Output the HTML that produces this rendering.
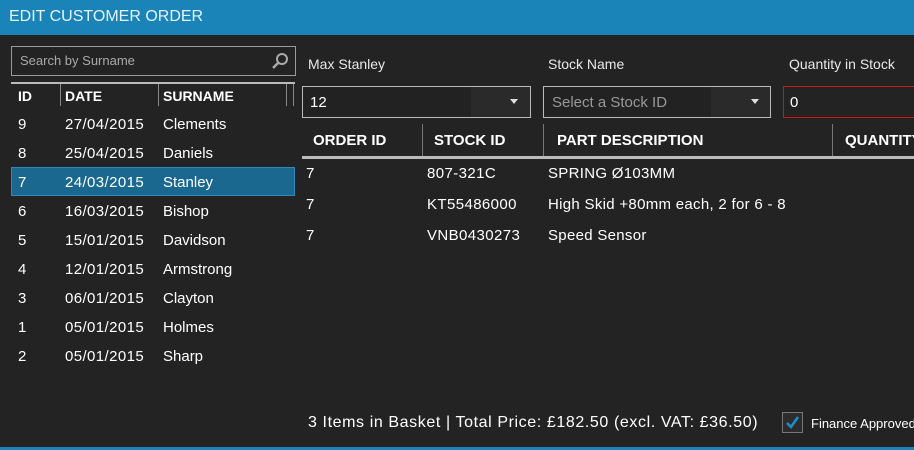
<!DOCTYPE html>
<html><head><style>
*{margin:0;padding:0;box-sizing:border-box}
body{width:914px;height:450px;background:#232323;font-family:"Liberation Sans",sans-serif;color:#fff;position:relative;overflow:hidden}
.a{position:absolute;white-space:nowrap}
.t{font-size:15px}
.h{font-weight:bold;font-size:14px}
.lab{font-size:14px;color:#e8e8e8}
</style></head><body>
<div class="a" style="left:0;top:0;width:914px;height:35px;background:#1a84b9"></div>
<div class="a" style="left:9px;top:8px;font-size:16px;color:#e6f2f8">EDIT CUSTOMER ORDER</div>
<div class="a" style="left:0;top:447px;width:914px;height:3px;background:#1a84b9"></div>

<div class="a" style="left:11px;top:46px;width:285px;height:30px;border:1px solid #9a9a9a"></div>
<div class="a" style="left:20px;top:53px;font-size:13px;color:#aaa">Search by Surname</div>
<svg class="a" style="left:271px;top:52px" width="18" height="18" viewBox="0 0 18 18"><circle cx="11" cy="7" r="5" fill="none" stroke="#aaa" stroke-width="2"/><line x1="7.5" y1="10.5" x2="2" y2="16" stroke="#aaa" stroke-width="2.5"/></svg>
<div class="a" style="left:11px;top:82px;width:284px;height:2px;background:#bbb"></div>
<div class="a" style="left:60px;top:84px;width:1px;height:22px;background:#888"></div>
<div class="a" style="left:158px;top:84px;width:1px;height:22px;background:#888"></div>
<div class="a" style="left:286px;top:84px;width:1px;height:22px;background:#888"></div>
<div class="a" style="left:293px;top:84px;width:1px;height:22px;background:#888"></div>
<div class="a h" style="left:18px;top:88px">ID</div>
<div class="a h" style="left:65px;top:88px">DATE</div>
<div class="a h" style="left:163px;top:88px">SURNAME</div>
<div class="a" style="left:11px;top:167px;width:284px;height:29px;background:#1a6890;border:1px solid #2e8ab8"></div>
<div class="a t" style="left:18px;top:110px;line-height:29px">9<br>8<br>7<br>6<br>5<br>4<br>3<br>1<br>2</div>
<div class="a t" style="left:65px;top:110px;line-height:29px;letter-spacing:0.4px">27/04/2015<br>25/04/2015<br>24/03/2015<br>16/03/2015<br>15/01/2015<br>12/01/2015<br>06/01/2015<br>05/01/2015<br>05/01/2015</div>
<div class="a t" style="left:163px;top:110px;line-height:29px">Clements<br>Daniels<br>Stanley<br>Bishop<br>Davidson<br>Armstrong<br>Clayton<br>Holmes<br>Sharp</div>

<div class="a lab" style="left:308px;top:56px">Max Stanley</div>
<div class="a lab" style="left:548px;top:56px">Stock Name</div>
<div class="a lab" style="left:789px;top:56px">Quantity in Stock</div>
<div class="a" style="left:302px;top:86px;width:229px;height:32px;border:1px solid #bbb;background:#222"></div>
<div class="a" style="left:471px;top:87px;width:59px;height:30px;background:#2a2a2a"></div>
<div class="a t" style="left:310px;top:94px">12</div>
<div class="a" style="left:510px;top:99px;width:0;height:0;border-left:4px solid transparent;border-right:4px solid transparent;border-top:5px solid #ddd"></div>
<div class="a" style="left:543px;top:86px;width:228px;height:32px;border:1px solid #bbb;background:#222"></div>
<div class="a" style="left:711px;top:87px;width:59px;height:30px;background:#2a2a2a"></div>
<div class="a t" style="left:552px;top:94px;color:#999">Select a Stock ID</div>
<div class="a" style="left:751px;top:99px;width:0;height:0;border-left:4px solid transparent;border-right:4px solid transparent;border-top:5px solid #ddd"></div>
<div class="a" style="left:783px;top:86px;width:140px;height:32px;border:1px solid #c8161d"></div>
<div class="a t" style="left:790px;top:94px">0</div>

<div class="a" style="left:422px;top:124px;width:1px;height:32px;background:#777"></div>
<div class="a" style="left:543px;top:124px;width:1px;height:32px;background:#777"></div>
<div class="a" style="left:832px;top:124px;width:1px;height:32px;background:#777"></div>
<div class="a h" style="left:313px;top:132px;font-size:15px">ORDER ID</div>
<div class="a h" style="left:434px;top:132px;font-size:15px">STOCK ID</div>
<div class="a h" style="left:557px;top:132px;font-size:15px">PART DESCRIPTION</div>
<div class="a h" style="left:845px;top:132px;font-size:15px">QUANTITY</div>
<div class="a" style="left:302px;top:156px;width:612px;height:3px;background:#bbb"></div>
<div class="a t" style="left:306px;top:158px;line-height:31px">7<br>7<br>7</div>
<div class="a t" style="left:427px;top:158px;line-height:31px;letter-spacing:0.4px">807-321C<br>KT55486000<br>VNB0430273</div>
<div class="a t" style="left:548px;top:158px;line-height:31px;letter-spacing:0.3px">SPRING Ø103MM<br>High Skid +80mm each, 2 for 6 - 8<br>Speed Sensor</div>

<div class="a" style="left:308px;top:414px;width:458px;overflow:hidden;font-size:16px;letter-spacing:0.6px">3 Items in Basket | Total Price: £182.50 (excl. VAT: £36.50)</div>
<div class="a" style="left:782px;top:412px;width:21px;height:21px;border:1px solid #777;background:#2c2c2c"></div>
<svg class="a" style="left:784px;top:414px" width="17" height="17" viewBox="0 0 17 17"><path d="M3 9 L7 13 L14 3" fill="none" stroke="#1b8fd0" stroke-width="2.5"/></svg>
<div class="a" style="left:811px;top:416px;font-size:13px">Finance Approved</div>
</body></html>
